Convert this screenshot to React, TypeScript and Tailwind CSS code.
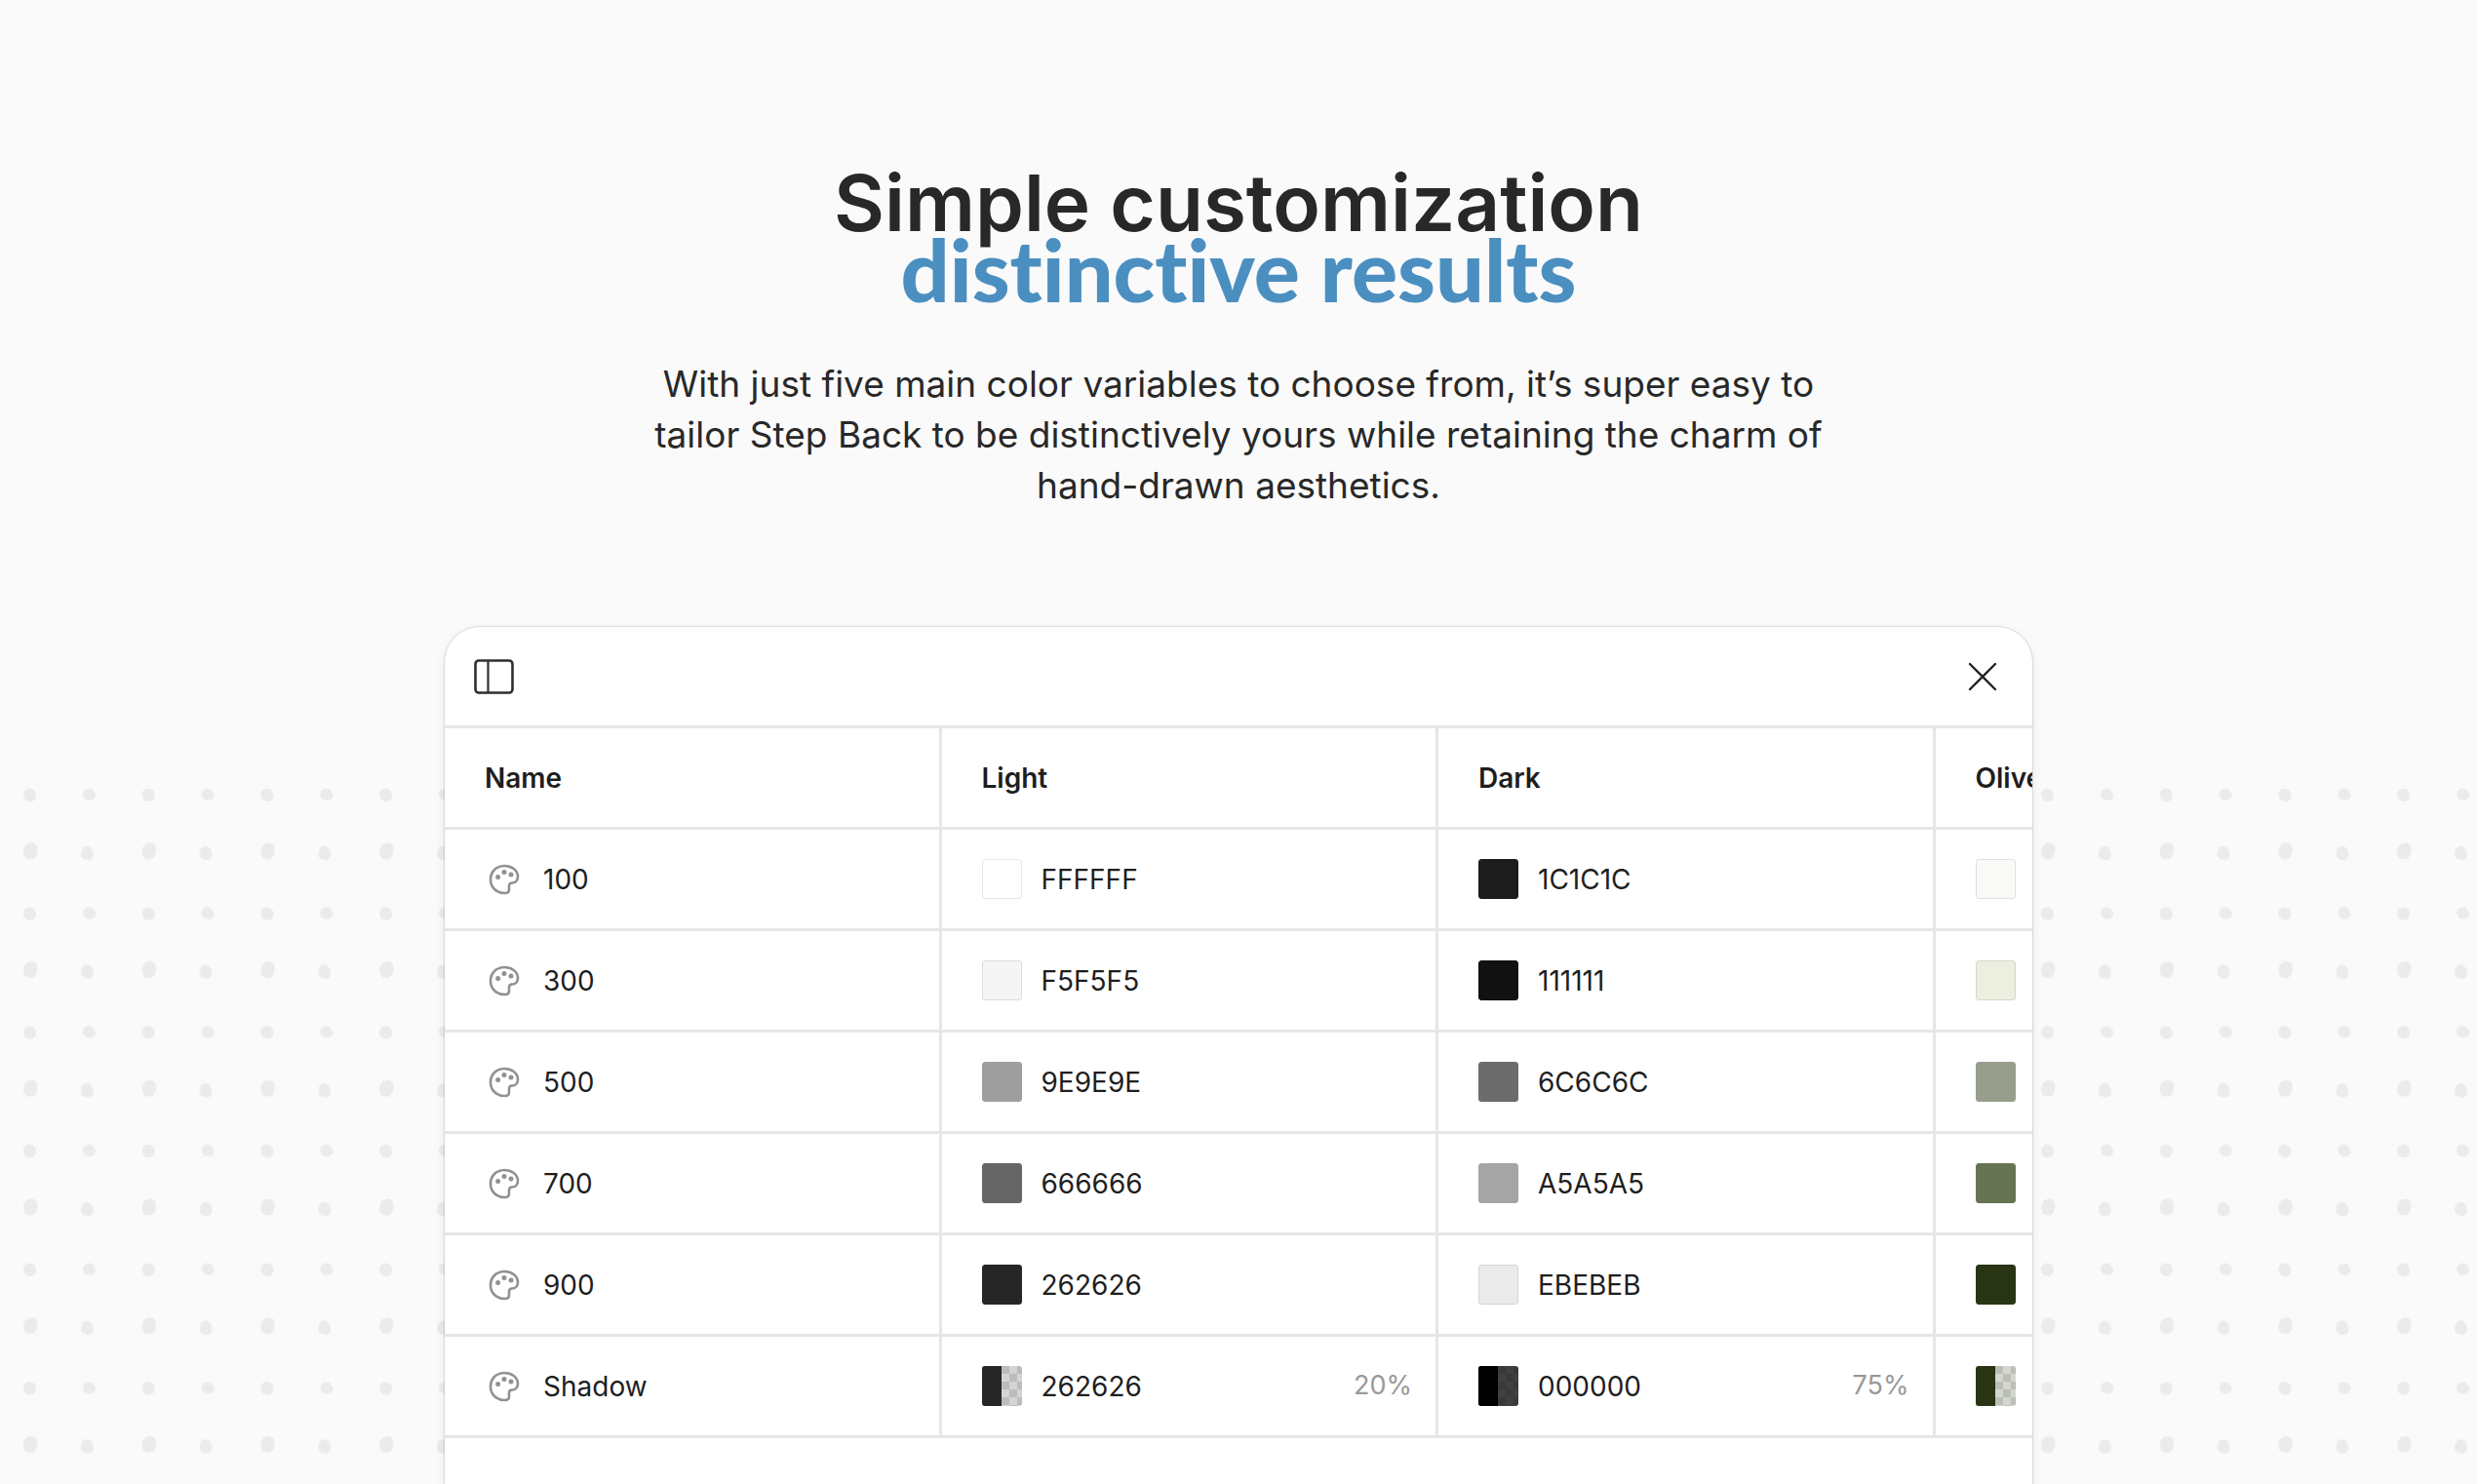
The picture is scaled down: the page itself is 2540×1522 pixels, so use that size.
import React from "react";

type Swatch = { hex: string; color: string; edge?: string; alpha?: string; tint?: string };
type Row = { name: string; cells: Swatch[] };

const rows: Row[] = [
  { name: "100", cells: [{ hex: "FFFFFF", color: "#ffffff", edge: "#e6e6e6" }, { hex: "1C1C1C", color: "#1c1c1c" }, { hex: "F9F9F7", color: "#f9f9f7", edge: "#e0e0de" }] },
  { name: "300", cells: [{ hex: "F5F5F5", color: "#f5f5f5", edge: "#dddddd" }, { hex: "111111", color: "#111111" }, { hex: "ECEFE0", color: "#ecefe0", edge: "#d5d7ca" }] },
  { name: "500", cells: [{ hex: "9E9E9E", color: "#9e9e9e" }, { hex: "6C6C6C", color: "#6c6c6c" }, { hex: "979E8D", color: "#979e8d" }] },
  { name: "700", cells: [{ hex: "666666", color: "#666666" }, { hex: "A5A5A5", color: "#a5a5a5" }, { hex: "667453", color: "#667453" }] },
  { name: "900", cells: [{ hex: "262626", color: "#262626" }, { hex: "EBEBEB", color: "#ebebeb", edge: "#d4d4d4" }, { hex: "283413", color: "#283413" }] },
  {
    name: "Shadow",
    cells: [
      { hex: "262626", color: "#262626", alpha: "20%", tint: "#26262633" },
      { hex: "000000", color: "#000000", alpha: "75%", tint: "#000000bf" },
      { hex: "283413", color: "#283413", alpha: "20%", tint: "#28341333" },
    ],
  },
];

function PaletteIcon() {
  return (
    <svg className="size-8 shrink-0" viewBox="0 0 32 32" fill="none" aria-hidden="true">
      <path
        d="M16 2C23.5 2 30 6.3 30 13.2C30 17.2 27.4 19.4 24 19.5C21.6 19.6 21 20.8 21 23V26.5C21 29 19.2 30 16.6 30C8 30 2 24 2 16C2 8 8 2 16 2Z"
        stroke="#919191"
        strokeWidth="2.6"
        strokeLinejoin="round"
      />
      <circle cx="9.6" cy="13.6" r="2.5" fill="#919191" />
      <circle cx="16" cy="8.6" r="2.5" fill="#919191" />
      <circle cx="23" cy="11" r="2.5" fill="#919191" />
    </svg>
  );
}

function SwatchBox({ swatch }: { swatch: Swatch }) {
  if (swatch.tint) {
    return (
      <svg className="size-[41px] shrink-0 rounded-[3px]" viewBox="0 0 41 41" aria-hidden="true">
        <rect width="41" height="41" fill="#ffffff" />
        {Array.from({ length: 18 }, (_, i) => {
          const col = i % 3;
          const row = Math.floor(i / 3);
          if ((col + row) % 2) return null;
          return <rect key={i} x={20 + col * 8} y={row * 8} width="8" height="8" fill="#e1e1e1" />;
        })}
        <rect width="41" height="41" fill={swatch.tint} />
        <rect width="20" height="41" fill={swatch.color} />
      </svg>
    );
  }
  return (
    <span
      className="size-[41px] shrink-0 rounded-[3px] border"
      style={{ backgroundColor: swatch.color, borderColor: swatch.edge ?? swatch.color }}
    />
  );
}

function Dots() {
  return (
    <svg className="absolute inset-x-0 bottom-0 h-[722px] w-full" aria-hidden="true">
      <defs>
        <pattern id="dots" width="365" height="365" patternUnits="userSpaceOnUse" patternTransform="scale(0.33345)">
          <g fill="#ebebeb">
            <path d="M72 44C72 33 80 26 91 26C103 26 111 35 111 47C111 59 103 67 92 66C80 66 72 57 72 44Z" />
            <path d="M255 43C255 32 264 25 275 26C282 26 287 30 289 36C293 40 295 45 294 51C291 59 283 63 275 63C263 63 255 55 255 43Z" />
            <path d="M72 220C73 204 82 193 96 193C108 193 115 201 115 213C114 229 111 244 92 244C79 244 71 234 72 220Z" />
            <path d="M249 229C249 213 257 203 267 203C280 204 286 215 287 228C287 238 284 243 276 246C260 247 249 241 249 229Z" />
          </g>
        </pattern>
      </defs>
      <rect width="100%" height="100%" fill="url(#dots)" />
    </svg>
  );
}

export default function App() {
  return (
    <main className="relative flex h-screen flex-col items-center overflow-hidden bg-[#fafafa] text-[#282828]">
      <Dots />
      <header className="relative flex flex-col items-center pt-[168px] text-center">
        <h1 className="flex flex-col items-center">
          <span className="font-[Inter,sans-serif] text-[80px] leading-[80px] font-semibold">Simple customization</span>
          <span className="-mt-3 font-[Lato,cursive] text-[88px] leading-[80px] font-black text-[#4b8fc1] [font-variant-ligatures:none]">
            distinctive results
          </span>
        </h1>
        <p className="mt-13 font-[Inter,sans-serif] text-[37px] leading-[52px]">
          With just five main color variables to choose from, it’s super easy to
          <br />
          tailor Step Back to be distinctively yours while retaining the charm of
          <br />
          hand-drawn aesthetics.
        </p>
      </header>

      <section className="relative mt-[119px] w-full max-w-[1628px] grow overflow-hidden rounded-t-[36px] bg-white font-[Inter,sans-serif] text-[28px] text-[#1e1e1e] shadow-[0_0_0_1px_#0000001a,0_4px_12px_#00000014]">
        <div className="flex h-[101px] items-center justify-between px-[30px]">
          <button type="button" aria-label="Toggle sidebar">
            <svg className="h-9 w-[42px]" viewBox="0 0 42 36" fill="none" stroke="#2f2f2f" aria-hidden="true">
              <rect x="1.5" y="1.5" width="38" height="33" rx="3.5" strokeWidth="2.6" />
              <path d="M14.5 2V34" strokeWidth="2.2" />
            </svg>
          </button>
          <button type="button" aria-label="Close" className="mr-1">
            <svg className="size-8" viewBox="0 0 32 32" fill="none" stroke="#222222" strokeWidth="2.4" strokeLinecap="round" aria-hidden="true">
              <path d="M2 3L28 29M28 3L2 29" />
            </svg>
          </button>
        </div>
        <table className="w-[2038px] table-fixed border-separate border-spacing-0 border-t-3 border-[#e6e6e6] text-left">
          <thead>
            <tr className="h-[104px]">
              {["Name", "Light", "Dark", "Olive"].map((title) => (
                <th key={title} scope="col" className="border-r-3 border-b-3 border-[#e6e6e6] pl-[41px] font-semibold">
                  {title}
                </th>
              ))}
            </tr>
          </thead>
          <tbody>
            {rows.map((row) => (
              <tr key={row.name} className="h-[104px]">
                <th scope="row" className="border-r-3 border-b-3 border-[#e6e6e6] pl-[45px] font-normal">
                  <span className="flex items-center gap-6">
                    <PaletteIcon />
                    {row.name}
                  </span>
                </th>
                {row.cells.map((cell, i) => (
                  <td key={i} className="border-r-3 border-b-3 border-[#e6e6e6] pr-6 pl-[41px]">
                    <span className="flex items-center gap-5">
                      <SwatchBox swatch={cell} />
                      {cell.hex}
                      {cell.alpha && <span className="ml-auto text-[27px] text-[#999999]">{cell.alpha}</span>}
                    </span>
                  </td>
                ))}
              </tr>
            ))}
          </tbody>
        </table>
      </section>
    </main>
  );
}
